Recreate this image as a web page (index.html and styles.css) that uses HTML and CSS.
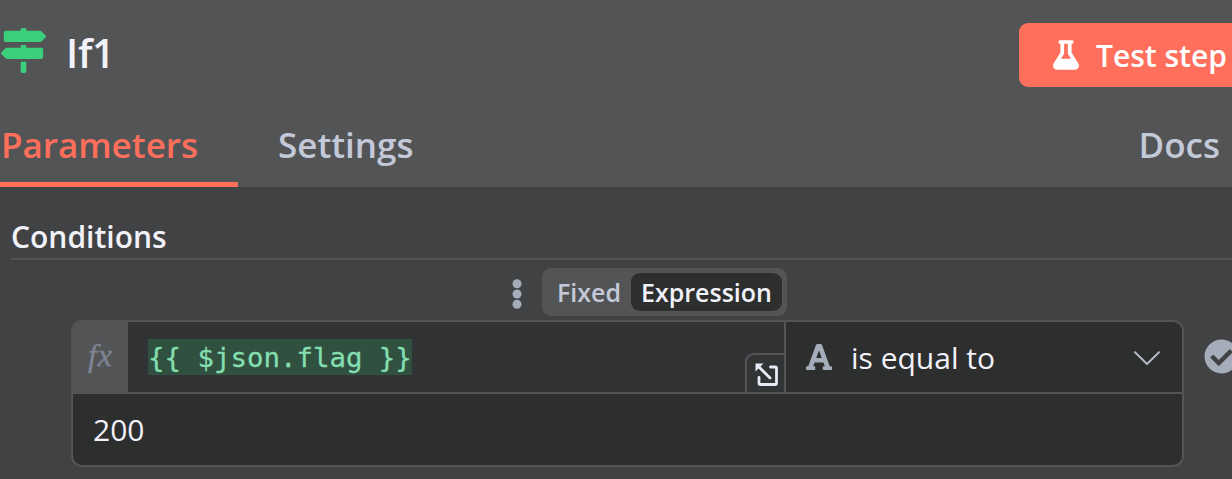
FILE: index.html
```html
<!DOCTYPE html>
<html lang="en">
<head>
<meta charset="utf-8">
<title>If1</title>
<link rel="stylesheet" href="styles.css">
</head>
<body>
<header class="header">
  <div class="title-row">
    <svg class="node-icon" viewBox="0 0 512 512"><path fill="#3ccf7b" d="M507.300 84.700L464 41.400c-6-6-14.100-9.400-22.600-9.400H288V16c0-8.800-7.200-16-16-16h-32c-8.800 0-16 7.200-16 16v16H56c-13.300 0-24 10.700-24 24v80c0 13.300 10.700 24 24 24h385.400c8.500 0 16.600-3.400 22.600-9.400l43.300-43.300c6.300-6.300 6.300-16.400 0-22.600zM224 496c0 8.800 7.200 16 16 16h32c8.800 0 16-7.200 16-16V384h-64v112zm232-272H288v-32h-64v32H70.600c-8.500 0-16.600 3.400-22.600 9.400L4.700 276.700c-6.200 6.200-6.200 16.400 0 22.600L48 342.600c6 6 14.100 9.400 22.600 9.400H456c13.300 0 24-10.700 24-24v-80c0-13.300-10.700-24-24-24z"/></svg>
    <h1 class="title">If1</h1>
    <button class="test-button">
      <svg class="flask" viewBox="0 0 448 512"><path fill="#fff" d="M437.200 403.500L320 215V64h8c13.300 0 24-10.700 24-24V24c0-13.300-10.700-24-24-24H120c-13.300 0-24 10.700-24 24v16c0 13.300 10.700 24 24 24h8v151L10.800 403.500C-18.500 450.600 15.300 512 70.900 512h306.200c55.700 0 89.400-61.500 60.100-108.500zM137.900 320l48.200-77.600c3.700-5.200 5.800-11.600 5.800-18.400V64h64v160c0 6.900 2.200 13.200 5.800 18.400l48.200 77.600h-172z"/></svg>
      <span class="test-label">Test step</span>
    </button>
  </div>
  <nav class="tabs">
    <a class="tab active">Parameters</a>
    <a class="tab settings">Settings</a>
    <a class="tab docs">Docs</a>
  </nav>
</header>
<main class="content">
  <div class="section-title">Conditions</div>
  <div class="options">
    <svg class="dots" viewBox="0 0 10 30"><g fill="#a6adba"><circle cx="5" cy="4.700" r="4.500"/><circle cx="5" cy="15" r="4.500"/><circle cx="5" cy="25.300" r="4.500"/></g></svg>
    <div class="toggle">
      <span class="choice">Fixed</span>
      <span class="choice selected">Expression</span>
    </div>
  </div>
  <div class="condition-row">
    <div class="condition">
      <div class="top">
        <div class="fx">fx</div>
        <div class="expression">
          <code class="code">{{ $json.flag }}</code>
          <div class="expand"><svg viewBox="0 0 24 24"><g fill="none" stroke="#e6eaf4" stroke-width="2.800" stroke-linecap="round"><path d="M15.500 4H20a1.500 1.500 0 0 1 1.500 1.500V20a1.500 1.500 0 0 1-1.500 1.500H5.500A1.500 1.500 0 0 1 4 20V14.500"/><path d="M3 3L15 15"/></g><path fill="#e6eaf4" d="M.5 .5H8.500L.5 8.500z"/></svg></div>
        </div>
        <div class="operator">
          <svg class="letter" viewBox="0 0 448 512"><path fill="#a6adba" d="M432 416h-23.400L277.800 53.700A32 32 0 0 0 247.600 32h-47.200a32 32 0 0 0-30.200 21.700L39.400 416H16a16 16 0 0 0-16 16v32a16 16 0 0 0 16 16h128a16 16 0 0 0 16-16v-32a16 16 0 0 0-16-16h-19.600l23.300-64h152.600l23.300 64H304a16 16 0 0 0-16 16v32a16 16 0 0 0 16 16h128a16 16 0 0 0 16-16v-32a16 16 0 0 0-16-16zM176.800 272L224 142.500 271.200 272z"/></svg>
          <span class="op-label">is equal to</span>
          <svg class="chevron" viewBox="0 0 26 15"><path d="M1 1.200L13 13L25 1.200" fill="none" stroke="#b4bacb" stroke-width="1.900" stroke-linecap="round" stroke-linejoin="round"/></svg>
        </div>
      </div>
      <div class="value">200</div>
    </div>
    <svg class="check" viewBox="0 0 512 512"><path fill="#a6adba" d="M504 256c0 137-111 248-248 248S8 393 8 256 119 8 256 8s248 111 248 248zM227.300 387.300l184-184c6.200-6.200 6.200-16.400 0-22.600l-22.600-22.600c-6.200-6.200-16.400-6.200-22.600 0L216 308.100l-70.100-70.100c-6.200-6.200-16.400-6.200-22.600 0l-22.600 22.600c-6.200 6.200-6.200 16.400 0 22.600l104 104c6.200 6.200 16.400 6.200 22.600.1z"/></svg>
  </div>
</main>
</body>
</html>
```
FILE: styles.css
```css
* { box-sizing: border-box; }
body {
  margin: 0;
  width: 1232px;
  height: 479px;
  overflow: hidden;
  background: #414244;
  color: #f2f2fa;
  font-family: "Open Sans", "Noto Sans", sans-serif;
  font-size: 30px;
  white-space: nowrap;
}
svg { display: block; flex: none; }
.header { height: 187px; background: #535456; display: flex; flex-direction: column; }
.title-row { flex: none; height: 105px; display: flex; align-items: flex-start; padding: 23px 0 0 1px; }
.node-icon { width: 45px; height: 45px; margin-top: 5px; }
.title { margin: 0 0 0 20px; font-size: 40px; line-height: 60px; font-weight: 600; letter-spacing: -0.3px; }
.test-button {
  flex: none;
  display: flex;
  align-items: center;
  width: 240px;
  height: 64px;
  margin: 0 -27px 0 auto;
  padding: 0 0 0 34px;
  border: 0;
  border-radius: 9px;
  background: #ff6f5c;
  color: #fff;
  font: 600 30px/64px "Open Sans", sans-serif;
}
.test-label { padding-top: 1px; }
.flask { width: 26px; height: 30px; margin-right: 17px; }
.tabs { flex: none; height: 82px; display: flex; font-size: 35px; font-weight: 600; line-height: 80px; color: #c3c9d8; }
.active { width: 238px; height: 82px; padding-left: 1px; color: #ff6f5c; border-bottom: 5px solid #ff6f5c; }
.settings { padding-left: 40px; }
.docs { margin-left: auto; padding-right: 12px; }
.content { display: flex; flex-direction: column; padding-left: 11px; }
.section-title { height: 73px; border-bottom: 2px solid #535456; font-weight: 600; line-height: 100px; }
.options { height: 60px; display: flex; align-items: flex-start; padding: 8px 0 0 501px; }
.dots { width: 10px; height: 30px; margin: 11px 20px 0 0; }
.toggle { display: flex; align-items: center; width: 245px; height: 48px; padding: 5px; background: #535456; border-radius: 9px; font-size: 25px; font-weight: 600; line-height: 38px; color: #c3c9d8; }
.choice { width: 84px; padding-left: 10px; }
.selected { width: 151px; border-radius: 9px; background: #2d2e2e; color: #f2f2fa; }
.condition-row { display: flex; align-items: flex-start; padding-left: 60px; }
.condition { flex: none; width: 1113px; height: 147px; border: 2px solid #535456; border-radius: 11px; overflow: hidden; background: #2d2e2e; }
.top { display: flex; height: 72px; border-bottom: 2px solid #535456; }
.fx { width: 55px; background: #535456; color: #7d8493; text-align: center; letter-spacing: 1px; -webkit-text-stroke: 0.4px #7d8493; font: italic 32px/67px "Liberation Serif", serif; }
.expression { position: relative; width: 658px; border-right: 2px solid #535456; background: #323335; padding: 17px 0 0 20px; }
.code { display: block; width: 264px; height: 36px; background: #305040; color: #84dfb0; -webkit-text-stroke: 0.3px #84dfb0; font: 27.4px/37px "DejaVu Sans Mono", monospace; }
.expand { position: absolute; right: 0; bottom: 0; width: 39px; height: 39px; padding: 8px 0 0 8px; border: 2px solid #535456; border-width: 2px 0 0 2px; border-radius: 9px 0 0 0; }
.expand svg { width: 24px; height: 24px; }
.operator { flex: 1; display: flex; align-items: center; padding: 0 22px 0 20px; }
.letter { width: 26px; height: 30px; margin-right: 19px; }
.op-label { line-height: 73px; }
.chevron { width: 26px; height: 15px; margin-left: auto; margin-top: 2px; }
.value { height: 71px; padding-left: 20px; line-height: 71px; }
.check { width: 35px; height: 35px; margin: 19px 0 0 20px; }
```
